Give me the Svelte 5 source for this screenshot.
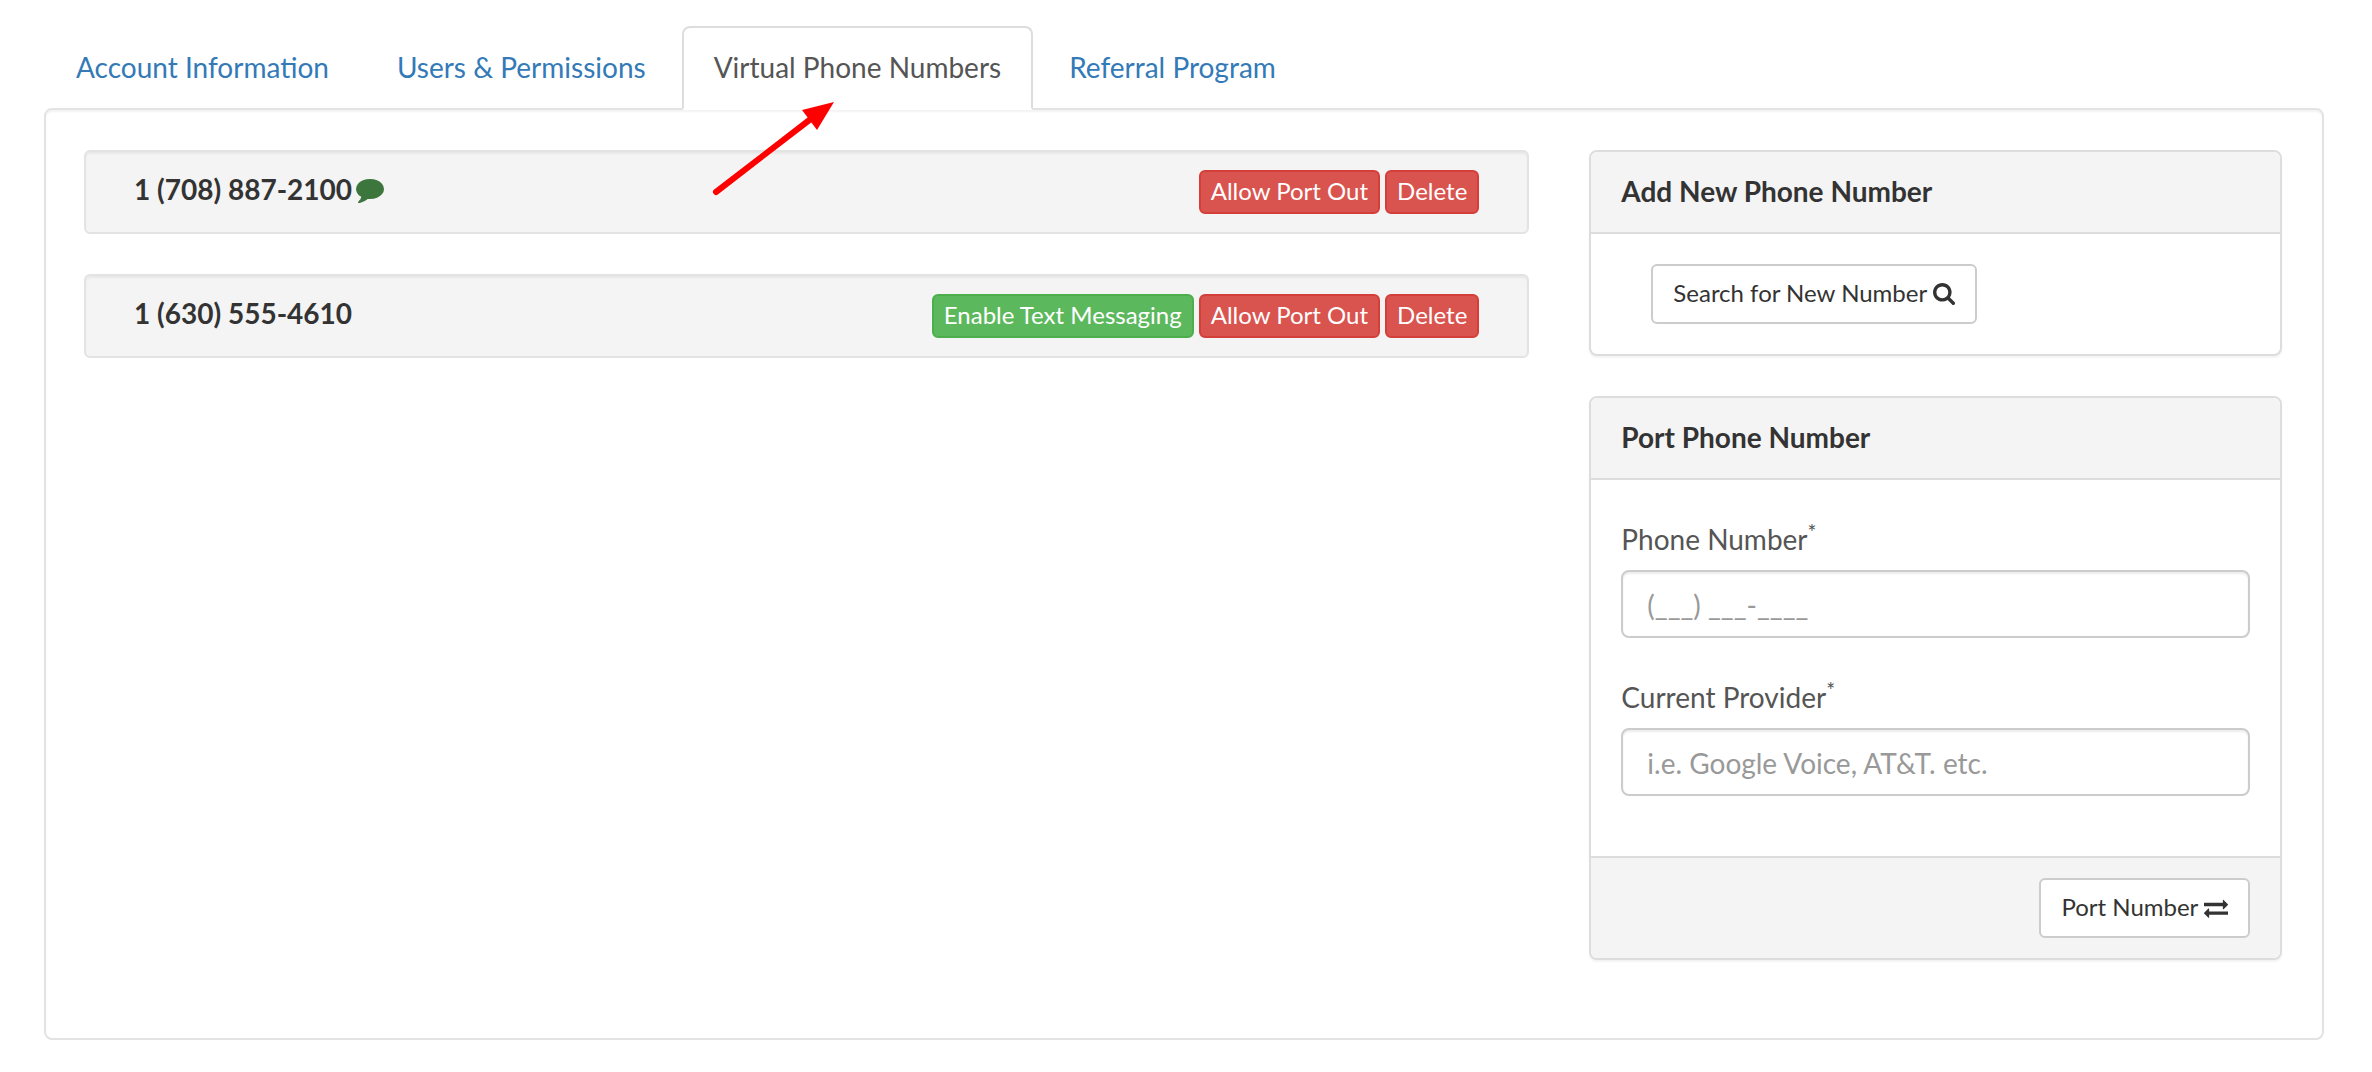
<script lang="ts">
  type Tab = { label: string; href: string; active?: boolean }

  type PhoneLine = {
    id: string
    display: string
    textEnabled: boolean
  }

  const tabs: Tab[] = [
    { label: 'Account Information', href: '#account' },
    { label: 'Users & Permissions', href: '#users' },
    { label: 'Virtual Phone Numbers', href: '#numbers', active: true },
    { label: 'Referral Program', href: '#referral' },
  ]

  const lines: PhoneLine[] = [
    { id: '17088872100', display: '1 (708) 887-2100', textEnabled: true },
    { id: '16305554610', display: '1 (630) 555-4610', textEnabled: false },
  ]

  let phone = $state('')
  let provider = $state('')
</script>

<div class="account">
  <nav class="tabs" aria-label="Account settings">
    {#each tabs as tab}
      <a
        class="tab"
        class:tab--active={tab.active}
        href={tab.href}
        aria-current={tab.active ? 'page' : undefined}
      >
        {tab.label}
        {#if tab.active}
          <svg class="pointer" viewBox="0 0 126 98" aria-hidden="true">
            <path d="M6 94 L102 20" stroke="#f00" stroke-width="6" stroke-linecap="round" />
            <path d="M124 4 L92 12 L107 32 Z" fill="#f00" />
          </svg>
        {/if}
      </a>
    {/each}
  </nav>

  <main class="content">
    <section class="lines" aria-label="Phone numbers">
      {#each lines as line (line.id)}
        <div class="line">
          <div class="line__number">
            <span>{line.display}</span>
            {#if line.textEnabled}
              <svg class="line__icon" viewBox="0 256 1792 1536" role="img" aria-label="Text messaging enabled">
                <path d="M1792 896q0 174-120 321.5t-326 233-450 85.5q-70 0-145-8-198 175-460 242-49 14-114 22-17 2-30.5-9t-17.5-29v-1q-3-4-.5-12t2-10 4.5-9.5l6-9 7-8.5 8-9q7-8 31-34.5t34.5-38 31-39.5 32.5-51 27-59 26-76q-157-89-247.5-220t-90.5-281q0-174 120-321.5t326-233 450-85.5 450 85.5 326 233 120 321.5z" />
              </svg>
            {/if}
          </div>
          <div class="line__actions">
            {#if !line.textEnabled}
              <button class="btn btn--small btn--success" type="button">Enable Text Messaging</button>
            {/if}
            <button class="btn btn--small btn--danger" type="button">Allow Port Out</button>
            <button class="btn btn--small btn--danger" type="button">Delete</button>
          </div>
        </div>
      {/each}
    </section>

    <aside class="sidebar">
      <section class="card">
        <h2 class="card__heading">Add New Phone Number</h2>
        <div class="card__search">
          <button class="btn" type="button">
            Search for New Number
            <svg class="btn__search-icon" viewBox="64 128 1664 1664" aria-hidden="true">
              <path d="M1216 832q0-185-131.5-316.5t-316.5-131.5-316.5 131.5-131.5 316.5 131.5 316.5 316.5 131.5 316.5-131.5 131.5-316.5zm512 832q0 52-38 90t-90 38q-54 0-90-38l-343-342q-179 124-399 124-143 0-273.5-55.5t-225-150-150-225-55.5-273.5 55.5-273.5 150-225 225-150 273.5-55.5 273.5 55.5 225 150 150 225 55.5 273.5q0 220-124 399l343 343q37 37 37 90z" />
            </svg>
          </button>
        </div>
      </section>

      <form class="card" onsubmit={(event) => event.preventDefault()}>
        <h2 class="card__heading">Port Phone Number</h2>
        <div class="card__fields">
          <div class="field">
            <label class="field__label" for="port-phone">Phone Number<sup>*</sup></label>
            <input class="field__input" id="port-phone" type="tel" placeholder="(___) ___-____" bind:value={phone} />
          </div>
          <div class="field">
            <label class="field__label" for="port-provider">Current Provider<sup>*</sup></label>
            <input
              class="field__input"
              id="port-provider"
              type="text"
              placeholder="i.e. Google Voice, AT&T. etc."
              bind:value={provider}
            />
          </div>
        </div>
        <div class="card__footer">
          <button class="btn" type="submit">
            Port Number
            <svg class="btn__port-icon" viewBox="0 160 1792 1472" aria-hidden="true">
              <path d="M1792 1184v192q0 13-9.5 22.5t-22.5 9.5h-1376v192q0 13-9.5 22.5t-22.5 9.5q-12 0-24-10l-319-320q-9-9-9-22 0-14 9-23l320-320q9-9 23-9 13 0 22.5 9.5t9.5 22.5v192h1376q13 0 22.5 9.5t9.5 22.5zm0-544q0 14-9 23l-320 320q-9 9-23 9-13 0-22.5-9.5t-9.5-22.5v-192h-1376q-13 0-22.5-9.5t-9.5-22.5v-192q0-13 9.5-22.5t22.5-9.5h1376v-192q0-14 9-23t23-9q12 0 24 10l319 319q9 9 9 23z" />
            </svg>
          </button>
        </div>
      </form>
    </aside>
  </main>
</div>

<style>
  :global(body) {
    margin: 0;
    background: #fff;
  }

  .account {
    padding: 26px 48px 32px 44px;
    font-family: Lato, 'Open Sans', sans-serif;
    font-size: 28px;
    line-height: 40px;
    color: #333;
  }

  .tabs {
    display: flex;
    gap: 4px;
    margin-bottom: -2px;
  }

  .tab {
    position: relative;
    padding: 19px 30px 21px;
    border: 2px solid transparent;
    border-radius: 8px 8px 0 0;
    color: #337ab7;
    text-decoration: none;
    white-space: nowrap;
  }

  .tab--active {
    z-index: 1;
    border-color: #ddd;
    border-bottom-color: #fff;
    background: #fff;
    color: #555;
  }

  .pointer {
    position: absolute;
    top: 70px;
    left: 26px;
    width: 126px;
    height: 98px;
    pointer-events: none;
  }

  .content {
    display: grid;
    grid-template-columns: repeat(12, 1fr);
    column-gap: 60px;
    align-items: start;
    padding: 40px 40px 78px 38px;
    border: 2px solid #e3e3e3;
    border-radius: 8px;
    background: #fff;
    box-shadow: inset 0 2px 2px rgb(0 0 0 / 0.05);
  }

  .lines {
    grid-column: span 8;
    display: flex;
    flex-direction: column;
    gap: 40px;
  }

  .line {
    display: flex;
    align-items: flex-start;
    justify-content: space-between;
    padding: 18px 48px;
    border: 2px solid #e3e3e3;
    border-radius: 6px;
    background: #f4f4f4;
    box-shadow: inset 0 2px 2px rgb(0 0 0 / 0.05);
  }

  .line__number {
    display: flex;
    align-items: center;
    gap: 4px;
    font-weight: 700;
    line-height: 38px;
  }

  .line__icon {
    width: 28px;
    height: 24px;
    margin-top: 4px;
    fill: #3c763d;
  }

  .line__actions {
    display: flex;
    gap: 5px;
  }

  .btn {
    padding: 11px 20px 13px;
    border: 2px solid #ccc;
    border-radius: 6px;
    background: #fff;
    color: #333;
    font-family: inherit;
    font-size: 24px;
    line-height: 32px;
    cursor: pointer;
  }

  .btn svg {
    fill: currentColor;
  }

  .btn--small {
    padding: 3px 10px 5px;
    color: #fff;
  }

  .btn--success {
    border-color: #4cae4c;
    background: #5cb85c;
  }

  .btn--danger {
    border-color: #d43f3a;
    background: #d9534f;
  }

  .btn__search-icon {
    width: 22px;
    height: 22px;
    vertical-align: -3px;
  }

  .btn__port-icon {
    width: 24px;
    height: 20px;
    vertical-align: -2px;
  }

  .sidebar {
    grid-column: span 4;
    display: flex;
    flex-direction: column;
    gap: 40px;
  }

  .card {
    border: 2px solid #ddd;
    border-radius: 8px;
    background: #fff;
    box-shadow: 0 2px 2px rgb(0 0 0 / 0.05);
    overflow: hidden;
  }

  .card__heading {
    margin: 0;
    padding: 19px 30px 21px;
    border-bottom: 2px solid #ddd;
    background: #f4f4f4;
    font-size: 28px;
    font-weight: 700;
  }

  .card__search {
    padding: 30px 60px;
  }

  .card__fields {
    display: flex;
    flex-direction: column;
    gap: 39px;
    padding: 39px 30px 60px;
  }

  .card__footer {
    display: flex;
    justify-content: flex-end;
    padding: 20px 30px;
    border-top: 2px solid #ddd;
    background: #f4f4f4;
  }

  .field {
    display: flex;
    flex-direction: column;
    gap: 11px;
  }

  .field__label {
    color: #555;
  }

  .field__label sup {
    font-size: 21px;
    line-height: 0;
  }

  .field__input {
    box-sizing: border-box;
    width: 100%;
    height: 68px;
    padding: 14px 24px 12px;
    border: 2px solid #ccc;
    border-radius: 8px;
    background: #fff;
    box-shadow: inset 0 2px 2px rgb(0 0 0 / 0.08);
    color: #555;
    font-family: inherit;
    font-size: 28px;
  }

  .field__input::placeholder {
    color: #999;
    opacity: 1;
  }

  @media (max-width: 1500px) {
    .lines,
    .sidebar {
      grid-column: 1 / -1;
    }

    .content {
      row-gap: 40px;
    }

    .tabs,
    .line {
      flex-wrap: wrap;
    }
  }
</style>
